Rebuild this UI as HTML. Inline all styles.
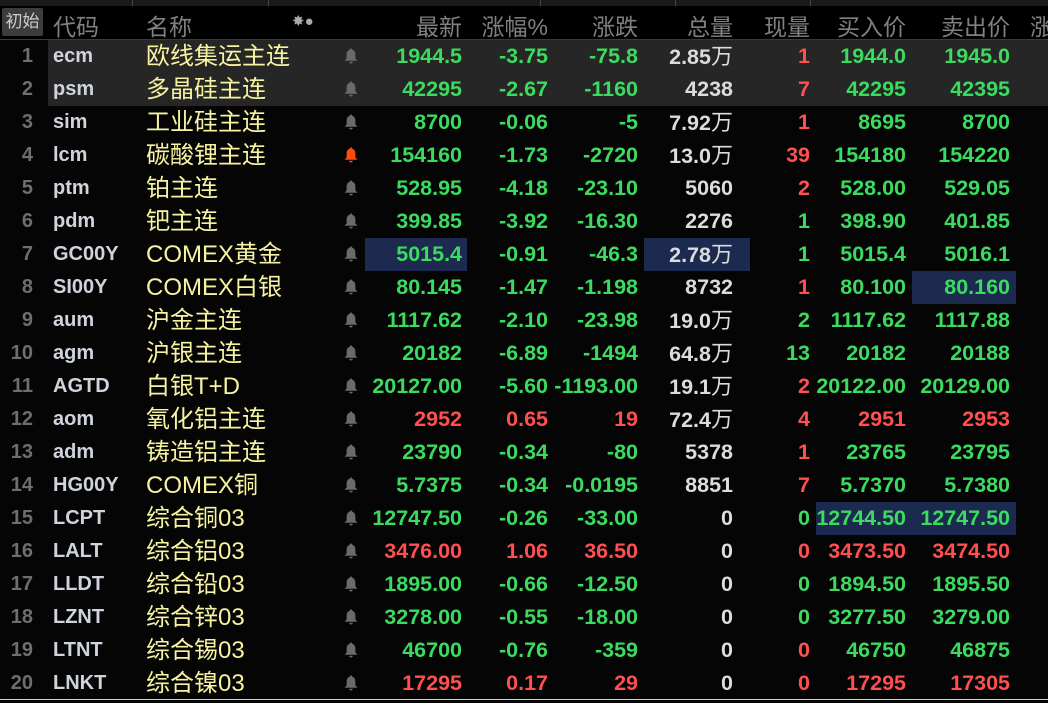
<!DOCTYPE html>
<html><head><meta charset="utf-8"><style>
body{margin:0;width:1048px;height:703px;background:#050505;overflow:hidden;position:relative;font-family:"Liberation Sans","Noto Sans CJK SC",sans-serif}
.top{position:absolute;left:0;top:0;width:1048px;height:6px;background:#1a1a1a}
.top i{position:absolute;top:0;height:6px;width:1px;background:#444}
.hdr{position:absolute;left:0;top:6px;width:1048px;height:33px;background:#000;border-bottom:1px solid #3a3a3a;color:#808080;font-size:23px}
.hdr span{position:absolute;top:2px;white-space:nowrap}
.init{position:absolute;left:2px;top:2px;width:41px;height:28px;background:#3c3c3c;border-radius:2px;color:#ccc;font-size:17px;line-height:28px;text-align:center}
.r{position:absolute;left:0;width:1048px;height:33px;font-size:21.5px;font-weight:bold;line-height:33px}
.r.h{background:linear-gradient(90deg,#050505 48px,#262626 48px)}
.r span{position:absolute;top:0;white-space:nowrap}
.ix{left:0;width:33px;text-align:right;color:#6e6e6e;height:33px;font-size:20px}
.cd{left:53px;color:#cfd3dc;font-size:20px}
.nm{left:146px;color:#f7f3a0;font-weight:normal;font-size:24px}
.r svg{position:absolute;left:344px;top:8px}
.c1{right:586px}.c2{right:500px}.c3{right:410px}.c4{right:315px}.c5{right:238px}.c6{right:142px}.c7{right:38px}
.g{color:#3bdb5f}.d{color:#ff4f4f}.w{color:#dcdcdc}
.hl{position:absolute;background:#1c2a4f;height:33px}
.wan{font-weight:normal;font-size:22px;position:static!important}
</style></head><body>
<div class="top"><i style="left:132px"></i><i style="left:268px"></i><i style="left:540px"></i><i style="left:675px"></i><i style="left:810px"></i></div>
<div class="hdr">
<div class="init">初始</div>
<span style="left:53px">代码</span><span style="left:146px">名称</span>
<span style="left:292px;font-size:15px;top:6px;color:#aaa">✸●</span>
<span style="right:586px">最新</span><span style="right:500px">涨幅%</span><span style="right:410px">涨跌</span><span style="right:315px">总量</span><span style="right:238px">现量</span><span style="right:142px">买入价</span><span style="right:38px">卖出价</span><span style="left:1030px">涨</span>
</div>
<svg width="0" height="0" style="position:absolute"><defs><symbol id="b" viewBox="0 0 14 16"><path d="M7 0.5c.9 0 1.3.6 1.3 1.2C10.6 2.4 11.4 4.4 11.4 7v3.4l2 2.4H.6l2-2.4V7C2.6 4.4 3.4 2.4 5.7 1.7 5.7 1.1 6.1.5 7 .5zM5.2 13.8h3.6c0 1-.8 1.7-1.8 1.7s-1.8-.7-1.8-1.7z"/></symbol></defs></svg>

<div class="hl" style="left:365px;top:238px;width:102px"></div>
<div class="hl" style="left:644px;top:238px;width:106px"></div>
<div class="hl" style="left:912px;top:271px;width:104px"></div>
<div class="hl" style="left:816px;top:502px;width:200px"></div>

<div class="r h" style="top:40px"><span class="ix">1</span><span class="cd">ecm</span><span class="nm">欧线集运主连</span><svg width="14" height="16" fill="#6a6a6a"><use href="#b"/></svg><span class="c1 g">1944.5</span><span class="c2 g">-3.75</span><span class="c3 g">-75.8</span><span class="c4 w">2.85<span class="wan">万</span></span><span class="c5 d">1</span><span class="c6 g">1944.0</span><span class="c7 g">1945.0</span></div>
<div class="r h" style="top:73px"><span class="ix">2</span><span class="cd">psm</span><span class="nm">多晶硅主连</span><svg width="14" height="16" fill="#6a6a6a"><use href="#b"/></svg><span class="c1 g">42295</span><span class="c2 g">-2.67</span><span class="c3 g">-1160</span><span class="c4 w">4238</span><span class="c5 d">7</span><span class="c6 g">42295</span><span class="c7 g">42395</span></div>
<div class="r" style="top:106px"><span class="ix">3</span><span class="cd">sim</span><span class="nm">工业硅主连</span><svg width="14" height="16" fill="#6a6a6a"><use href="#b"/></svg><span class="c1 g">8700</span><span class="c2 g">-0.06</span><span class="c3 g">-5</span><span class="c4 w">7.92<span class="wan">万</span></span><span class="c5 d">1</span><span class="c6 g">8695</span><span class="c7 g">8700</span></div>
<div class="r" style="top:139px"><span class="ix">4</span><span class="cd">lcm</span><span class="nm">碳酸锂主连</span><svg width="14" height="16" fill="#ff4a10"><use href="#b"/></svg><span class="c1 g">154160</span><span class="c2 g">-1.73</span><span class="c3 g">-2720</span><span class="c4 w">13.0<span class="wan">万</span></span><span class="c5 d">39</span><span class="c6 g">154180</span><span class="c7 g">154220</span></div>
<div class="r" style="top:172px"><span class="ix">5</span><span class="cd">ptm</span><span class="nm">铂主连</span><svg width="14" height="16" fill="#6a6a6a"><use href="#b"/></svg><span class="c1 g">528.95</span><span class="c2 g">-4.18</span><span class="c3 g">-23.10</span><span class="c4 w">5060</span><span class="c5 d">2</span><span class="c6 g">528.00</span><span class="c7 g">529.05</span></div>
<div class="r" style="top:205px"><span class="ix">6</span><span class="cd">pdm</span><span class="nm">钯主连</span><svg width="14" height="16" fill="#6a6a6a"><use href="#b"/></svg><span class="c1 g">399.85</span><span class="c2 g">-3.92</span><span class="c3 g">-16.30</span><span class="c4 w">2276</span><span class="c5 g">1</span><span class="c6 g">398.90</span><span class="c7 g">401.85</span></div>
<div class="r" style="top:238px"><span class="ix">7</span><span class="cd">GC00Y</span><span class="nm">COMEX黄金</span><svg width="14" height="16" fill="#6a6a6a"><use href="#b"/></svg><span class="c1 g">5015.4</span><span class="c2 g">-0.91</span><span class="c3 g">-46.3</span><span class="c4 w">2.78<span class="wan">万</span></span><span class="c5 g">1</span><span class="c6 g">5015.4</span><span class="c7 g">5016.1</span></div>
<div class="r" style="top:271px"><span class="ix">8</span><span class="cd">SI00Y</span><span class="nm">COMEX白银</span><svg width="14" height="16" fill="#6a6a6a"><use href="#b"/></svg><span class="c1 g">80.145</span><span class="c2 g">-1.47</span><span class="c3 g">-1.198</span><span class="c4 w">8732</span><span class="c5 d">1</span><span class="c6 g">80.100</span><span class="c7 g">80.160</span></div>
<div class="r" style="top:304px"><span class="ix">9</span><span class="cd">aum</span><span class="nm">沪金主连</span><svg width="14" height="16" fill="#6a6a6a"><use href="#b"/></svg><span class="c1 g">1117.62</span><span class="c2 g">-2.10</span><span class="c3 g">-23.98</span><span class="c4 w">19.0<span class="wan">万</span></span><span class="c5 g">2</span><span class="c6 g">1117.62</span><span class="c7 g">1117.88</span></div>
<div class="r" style="top:337px"><span class="ix">10</span><span class="cd">agm</span><span class="nm">沪银主连</span><svg width="14" height="16" fill="#6a6a6a"><use href="#b"/></svg><span class="c1 g">20182</span><span class="c2 g">-6.89</span><span class="c3 g">-1494</span><span class="c4 w">64.8<span class="wan">万</span></span><span class="c5 g">13</span><span class="c6 g">20182</span><span class="c7 g">20188</span></div>
<div class="r" style="top:370px"><span class="ix">11</span><span class="cd">AGTD</span><span class="nm">白银T+D</span><svg width="14" height="16" fill="#6a6a6a"><use href="#b"/></svg><span class="c1 g">20127.00</span><span class="c2 g">-5.60</span><span class="c3 g">-1193.00</span><span class="c4 w">19.1<span class="wan">万</span></span><span class="c5 d">2</span><span class="c6 g">20122.00</span><span class="c7 g">20129.00</span></div>
<div class="r" style="top:403px"><span class="ix">12</span><span class="cd">aom</span><span class="nm">氧化铝主连</span><svg width="14" height="16" fill="#6a6a6a"><use href="#b"/></svg><span class="c1 d">2952</span><span class="c2 d">0.65</span><span class="c3 d">19</span><span class="c4 w">72.4<span class="wan">万</span></span><span class="c5 d">4</span><span class="c6 d">2951</span><span class="c7 d">2953</span></div>
<div class="r" style="top:436px"><span class="ix">13</span><span class="cd">adm</span><span class="nm">铸造铝主连</span><svg width="14" height="16" fill="#6a6a6a"><use href="#b"/></svg><span class="c1 g">23790</span><span class="c2 g">-0.34</span><span class="c3 g">-80</span><span class="c4 w">5378</span><span class="c5 d">1</span><span class="c6 g">23765</span><span class="c7 g">23795</span></div>
<div class="r" style="top:469px"><span class="ix">14</span><span class="cd">HG00Y</span><span class="nm">COMEX铜</span><svg width="14" height="16" fill="#6a6a6a"><use href="#b"/></svg><span class="c1 g">5.7375</span><span class="c2 g">-0.34</span><span class="c3 g">-0.0195</span><span class="c4 w">8851</span><span class="c5 d">7</span><span class="c6 g">5.7370</span><span class="c7 g">5.7380</span></div>
<div class="r" style="top:502px"><span class="ix">15</span><span class="cd">LCPT</span><span class="nm">综合铜03</span><svg width="14" height="16" fill="#6a6a6a"><use href="#b"/></svg><span class="c1 g">12747.50</span><span class="c2 g">-0.26</span><span class="c3 g">-33.00</span><span class="c4 w">0</span><span class="c5 g">0</span><span class="c6 g">12744.50</span><span class="c7 g">12747.50</span></div>
<div class="r" style="top:535px"><span class="ix">16</span><span class="cd">LALT</span><span class="nm">综合铝03</span><svg width="14" height="16" fill="#6a6a6a"><use href="#b"/></svg><span class="c1 d">3476.00</span><span class="c2 d">1.06</span><span class="c3 d">36.50</span><span class="c4 w">0</span><span class="c5 d">0</span><span class="c6 d">3473.50</span><span class="c7 d">3474.50</span></div>
<div class="r" style="top:568px"><span class="ix">17</span><span class="cd">LLDT</span><span class="nm">综合铅03</span><svg width="14" height="16" fill="#6a6a6a"><use href="#b"/></svg><span class="c1 g">1895.00</span><span class="c2 g">-0.66</span><span class="c3 g">-12.50</span><span class="c4 w">0</span><span class="c5 g">0</span><span class="c6 g">1894.50</span><span class="c7 g">1895.50</span></div>
<div class="r" style="top:601px"><span class="ix">18</span><span class="cd">LZNT</span><span class="nm">综合锌03</span><svg width="14" height="16" fill="#6a6a6a"><use href="#b"/></svg><span class="c1 g">3278.00</span><span class="c2 g">-0.55</span><span class="c3 g">-18.00</span><span class="c4 w">0</span><span class="c5 g">0</span><span class="c6 g">3277.50</span><span class="c7 g">3279.00</span></div>
<div class="r" style="top:634px"><span class="ix">19</span><span class="cd">LTNT</span><span class="nm">综合锡03</span><svg width="14" height="16" fill="#6a6a6a"><use href="#b"/></svg><span class="c1 g">46700</span><span class="c2 g">-0.76</span><span class="c3 g">-359</span><span class="c4 w">0</span><span class="c5 d">0</span><span class="c6 g">46750</span><span class="c7 g">46875</span></div>
<div class="r" style="top:667px"><span class="ix">20</span><span class="cd">LNKT</span><span class="nm">综合镍03</span><svg width="14" height="16" fill="#6a6a6a"><use href="#b"/></svg><span class="c1 d">17295</span><span class="c2 d">0.17</span><span class="c3 d">29</span><span class="c4 w">0</span><span class="c5 d">0</span><span class="c6 d">17295</span><span class="c7 d">17305</span></div>
<div style="position:absolute;left:0;top:699px;width:1048px;height:1px;background:#d8d49a"></div>
</body></html>
